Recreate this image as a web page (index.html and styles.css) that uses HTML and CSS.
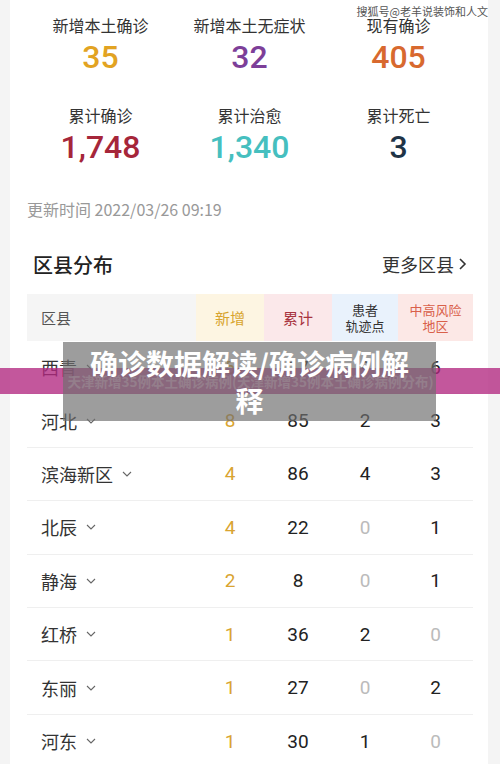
FILE: index.html
```html
<!DOCTYPE html>
<html lang="zh">
<head>
<meta charset="utf-8">
<link rel="stylesheet" href="styles.css">
</head>
<body>
<div class="card">
  <div class="stats">
    <div class="stat"><div class="label">新增本土确诊</div><div class="num c-gold">35</div></div>
    <div class="stat"><div class="label">新增本土无症状</div><div class="num c-purple">32</div></div>
    <div class="stat"><div class="label">现有确诊</div><div class="num c-orange">405</div></div>
    <div class="stat"><div class="label">累计确诊</div><div class="num c-red">1,748</div></div>
    <div class="stat"><div class="label">累计治愈</div><div class="num c-teal">1,340</div></div>
    <div class="stat"><div class="label">累计死亡</div><div class="num c-navy">3</div></div>
  </div>
  <div class="update">更新时间 2022/03/26 09:19</div>
  <div class="section-head">
    <div class="section-title">区县分布</div>
    <div class="more">更多区县<svg class="more-arrow" width="9" height="14" viewBox="0 0 9 14"><path d="M2 2l5 5-5 5" fill="none" stroke="#333" stroke-width="1.6"/></svg></div>
  </div>
  <div class="table">
    <div class="row head">
      <div class="cell name-col h-name">区县</div>
      <div class="cell h-new">新增</div>
      <div class="cell h-total">累计</div>
      <div class="cell h-track small">患者<br>轨迹点</div>
      <div class="cell h-risk small">中高风险<br>地区</div>
    </div>
    <div class="row"><div class="cell name-col">西青<svg class="chev" viewBox="0 0 10 6"><path d="M1 1l4 4 4-4" fill="none" stroke="#666" stroke-width="1.1"/></svg></div><div class="cell n-new">5</div><div class="cell">17</div><div class="cell">9</div><div class="cell">6</div></div>
    <div class="row"><div class="cell name-col">河北<svg class="chev" viewBox="0 0 10 6"><path d="M1 1l4 4 4-4" fill="none" stroke="#666" stroke-width="1.1"/></svg></div><div class="cell n-new">8</div><div class="cell">85</div><div class="cell">2</div><div class="cell">3</div></div>
    <div class="row"><div class="cell name-col">滨海新区<svg class="chev" viewBox="0 0 10 6"><path d="M1 1l4 4 4-4" fill="none" stroke="#666" stroke-width="1.1"/></svg></div><div class="cell n-new">4</div><div class="cell">86</div><div class="cell">4</div><div class="cell">3</div></div>
    <div class="row"><div class="cell name-col">北辰<svg class="chev" viewBox="0 0 10 6"><path d="M1 1l4 4 4-4" fill="none" stroke="#666" stroke-width="1.1"/></svg></div><div class="cell n-new">4</div><div class="cell">22</div><div class="cell zero">0</div><div class="cell">1</div></div>
    <div class="row"><div class="cell name-col">静海<svg class="chev" viewBox="0 0 10 6"><path d="M1 1l4 4 4-4" fill="none" stroke="#666" stroke-width="1.1"/></svg></div><div class="cell n-new">2</div><div class="cell">8</div><div class="cell zero">0</div><div class="cell">1</div></div>
    <div class="row"><div class="cell name-col">红桥<svg class="chev" viewBox="0 0 10 6"><path d="M1 1l4 4 4-4" fill="none" stroke="#666" stroke-width="1.1"/></svg></div><div class="cell n-new">1</div><div class="cell">36</div><div class="cell">2</div><div class="cell zero">0</div></div>
    <div class="row"><div class="cell name-col">东丽<svg class="chev" viewBox="0 0 10 6"><path d="M1 1l4 4 4-4" fill="none" stroke="#666" stroke-width="1.1"/></svg></div><div class="cell n-new">1</div><div class="cell">27</div><div class="cell zero">0</div><div class="cell">2</div></div>
    <div class="row last"><div class="cell name-col">河东<svg class="chev" viewBox="0 0 10 6"><path d="M1 1l4 4 4-4" fill="none" stroke="#666" stroke-width="1.1"/></svg></div><div class="cell n-new">1</div><div class="cell">30</div><div class="cell">1</div><div class="cell zero">0</div></div>
  </div>
</div>
<div class="watermark">搜狐号@老羊说装饰和人文</div>
<div class="band"><span class="band-text">天津新增35例本土确诊病例(天津新增35例本土确诊病例分布)</span></div>
<div class="title-box"><span class="title-text">确诊数据解读/确诊病例解释</span></div>
</body>
</html>
```

FILE: styles.css
```css
html, body {
  margin: 0;
  padding: 0;
}
body {
  background: #f4f4f4;
  width: 500px;
  height: 764px;
  overflow: hidden;
  position: relative;
  font-family: "Noto Sans CJK SC", "Noto Sans", sans-serif;
  color: #333;
}
.card {
  margin: 0 12px 0 10px;
  background: #fff;
  height: 764px;
  padding: 15px 15px 0 17px;
  box-sizing: border-box;
}
.stats {
  display: grid;
  grid-template-columns: repeat(3, 1fr);
  row-gap: 30px;
  margin-left: -1px;
}
.stat {
  display: flex;
  flex-direction: column;
  align-items: center;
  gap: 4px;
}
.label {
  font-size: 16px;
  line-height: 20px;
  color: #333;
}
.num {
  font-family: Roboto, "Noto Sans", sans-serif;
  font-size: 32px;
  line-height: 36px;
  font-weight: 500;
}
.c-gold { color: #e2a322; }
.c-purple { color: #7d3f99; }
.c-orange { color: #d8692f; }
.c-red { color: #a6263a; }
.c-teal { color: #46bfbf; }
.c-navy { color: #1f3447; }
.update {
  margin-top: 34px;
  font-size: 16px;
  line-height: 20px;
  color: #999;
}
.section-head {
  margin-top: 31px;
  display: flex;
  justify-content: space-between;
  align-items: center;
  padding: 0 6px 0 6px;
  height: 28px;
}
.section-title {
  font-size: 20px;
  font-weight: 500;
  color: #222;
}
.more {
  font-size: 18px;
  color: #333;
  display: flex;
  align-items: center;
  gap: 4px;
}
.more-arrow {
  display: block;
}
.table {
  margin-top: 16px;
}
.row {
  display: grid;
  grid-template-columns: 169px 68px 68px 66px 75px;
  height: 53.4px;
  border-bottom: 1px solid #efefef;
  box-sizing: border-box;
  font-family: Roboto, "Noto Sans CJK SC", sans-serif;
  font-size: 19px;
  color: #222;
}
.row.last { border-bottom: none; }
.row.head {
  height: 47px;
  border-bottom: none;
  font-family: "Noto Sans CJK SC", sans-serif;
  font-size: 15px;
}
.cell {
  display: flex;
  align-items: center;
  justify-content: center;
  text-align: center;
}
.name-col {
  justify-content: flex-start;
  padding-left: 14px;
  font-family: "Noto Sans CJK SC", sans-serif;
  font-size: 18px;
  color: #333;
}
.chev {
  width: 10px;
  height: 6px;
  margin-left: 9px;
}
.h-name { background: #f5f5f5; font-size: 15px; color: #555; }
.h-new { background: #fdf5e2; color: #d8a42e; }
.h-total { background: #fbe8ea; color: #a8333f; }
.h-track { background: #e9f2fc; color: #333; }
.h-risk { background: #fce8e6; color: #d9604a; }
.small { font-size: 13px; line-height: 16px; }
.n-new { color: #d9a431; }
.zero { color: #bbb; }
.watermark {
  position: absolute;
  top: 4px;
  right: 12px;
  font-size: 11px;
  line-height: 14px;
  color: #555;
  text-shadow: 0 0 2px #fff;
}
.band {
  position: absolute;
  left: 0;
  top: 368px;
  width: 500px;
  height: 26px;
  background: rgba(178, 40, 128, 0.78);
  display: flex;
  justify-content: center;
  align-items: center;
}
.band-text {
  font-size: 13.5px;
  font-weight: 700;
  color: rgba(255, 225, 240, 0.55);
  margin-left: 1px;
}
.title-box {
  position: absolute;
  left: 63px;
  top: 342px;
  width: 373px;
  height: 79px;
  box-sizing: border-box;
  padding: 0 20px;
  background: rgba(110, 110, 110, 0.68);
  display: flex;
  justify-content: center;
  align-items: center;
  text-align: center;
}
.title-text {
  font-size: 28px;
  line-height: 37px;
  font-weight: 700;
  color: #fff;
}
```
